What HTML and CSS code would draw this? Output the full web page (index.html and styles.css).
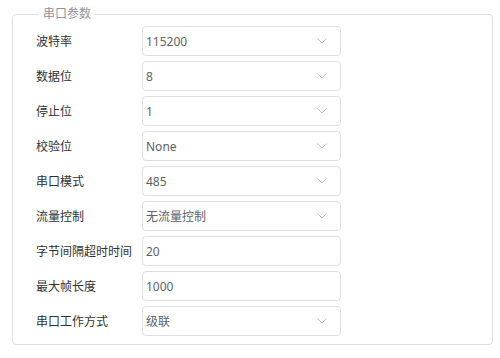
FILE: index.html
```html
<!DOCTYPE html>
<html lang="zh">
<head>
<meta charset="utf-8">
<link rel="stylesheet" href="styles.css">
</head>
<body>
<fieldset class="panel">
  <legend class="panel-title">串口参数</legend>
  <div class="form">
    <label class="lbl">波特率</label>
    <div class="ctl select"><span>115200</span><svg class="arrow" viewBox="0 0 10 6"><path d="M0.5 0.5 L5 5 L9.5 0.5" /></svg></div>
    <label class="lbl">数据位</label>
    <div class="ctl select"><span>8</span><svg class="arrow" viewBox="0 0 10 6"><path d="M0.5 0.5 L5 5 L9.5 0.5" /></svg></div>
    <label class="lbl">停止位</label>
    <div class="ctl select"><span>1</span><svg class="arrow" viewBox="0 0 10 6"><path d="M0.5 0.5 L5 5 L9.5 0.5" /></svg></div>
    <label class="lbl">校验位</label>
    <div class="ctl select"><span>None</span><svg class="arrow" viewBox="0 0 10 6"><path d="M0.5 0.5 L5 5 L9.5 0.5" /></svg></div>
    <label class="lbl">串口模式</label>
    <div class="ctl select"><span>485</span><svg class="arrow" viewBox="0 0 10 6"><path d="M0.5 0.5 L5 5 L9.5 0.5" /></svg></div>
    <label class="lbl">流量控制</label>
    <div class="ctl select"><span>无流量控制</span><svg class="arrow" viewBox="0 0 10 6"><path d="M0.5 0.5 L5 5 L9.5 0.5" /></svg></div>
    <label class="lbl">字节间隔超时时间</label>
    <div class="ctl"><span>20</span></div>
    <label class="lbl">最大帧长度</label>
    <div class="ctl"><span>1000</span></div>
    <label class="lbl">串口工作方式</label>
    <div class="ctl select"><span>级联</span><svg class="arrow" viewBox="0 0 10 6"><path d="M0.5 0.5 L5 5 L9.5 0.5" /></svg></div>
  </div>
</fieldset>
</body>
</html>
```

FILE: styles.css
```css
html, body {
  margin: 0;
  padding: 0;
  background: #fff;
}
body {
  font-family: "Noto Sans", "Noto Sans CJK SC", sans-serif;
}
.panel {
  box-sizing: border-box;
  width: 481px;
  height: 338px;
  margin: 7px 0 0 12px;
  padding: 5px 0 0 23px;
  border: 1px solid #dcdfe6;
  border-radius: 4px;
}
.panel-title {
  margin-left: 3px;
  padding: 0 4px;
  font-size: 12px;
  line-height: 14px;
  color: #909399;
}
.form {
  display: grid;
  grid-template-columns: 106px 199px;
  grid-auto-rows: 30px;
  row-gap: 5px;
  align-items: center;
}
.lbl {
  font-size: 12px;
  color: #303133;
  white-space: nowrap;
}
.ctl {
  box-sizing: border-box;
  height: 30px;
  display: flex;
  align-items: center;
  justify-content: space-between;
  padding: 0 13px 0 3px;
  border: 1px solid #dcdfe6;
  border-radius: 4px;
  font-size: 12px;
  color: #606266;
}
.arrow {
  width: 10px;
  height: 6px;
  fill: none;
  stroke: #c0c4cc;
  stroke-width: 1;
}
```
